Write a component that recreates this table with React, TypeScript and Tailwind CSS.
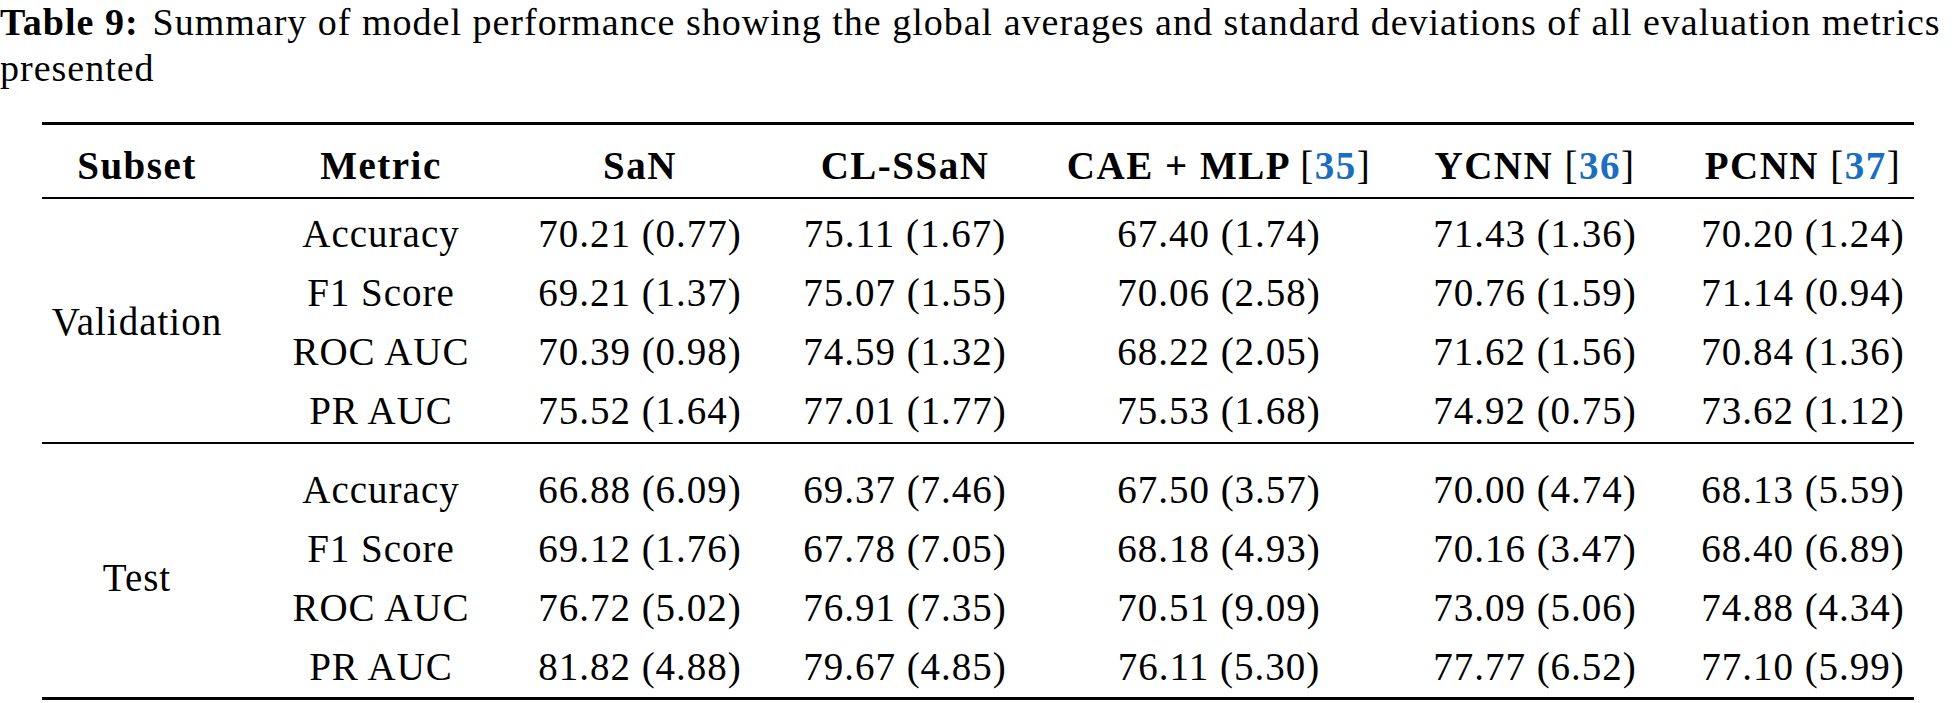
const COLS = "grid grid-cols-[190px_298px_220px_310px_318px_314px_222px]";

type Row = { metric: string; values: string[] };

const VALIDATION: Row[] = [
  { metric: "Accuracy", values: ["70.21 (0.77)", "75.11 (1.67)", "67.40 (1.74)", "71.43 (1.36)", "70.20 (1.24)"] },
  { metric: "F1 Score", values: ["69.21 (1.37)", "75.07 (1.55)", "70.06 (2.58)", "70.76 (1.59)", "71.14 (0.94)"] },
  { metric: "ROC AUC", values: ["70.39 (0.98)", "74.59 (1.32)", "68.22 (2.05)", "71.62 (1.56)", "70.84 (1.36)"] },
  { metric: "PR AUC", values: ["75.52 (1.64)", "77.01 (1.77)", "75.53 (1.68)", "74.92 (0.75)", "73.62 (1.12)"] },
];

const TEST: Row[] = [
  { metric: "Accuracy", values: ["66.88 (6.09)", "69.37 (7.46)", "67.50 (3.57)", "70.00 (4.74)", "68.13 (5.59)"] },
  { metric: "F1 Score", values: ["69.12 (1.76)", "67.78 (7.05)", "68.18 (4.93)", "70.16 (3.47)", "68.40 (6.89)"] },
  { metric: "ROC AUC", values: ["76.72 (5.02)", "76.91 (7.35)", "70.51 (9.09)", "73.09 (5.06)", "74.88 (4.34)"] },
  { metric: "PR AUC", values: ["81.82 (4.88)", "79.67 (4.85)", "76.11 (5.30)", "77.77 (6.52)", "77.10 (5.99)"] },
];

function Cite({ n }: { n: number }) {
  return (
    <>
      <span className="font-normal">[</span>
      <span className="text-[#1b6ec2]">{n}</span>
      <span className="font-normal">]</span>
    </>
  );
}

function HeadCell({ children }: { children: React.ReactNode }) {
  return (
    <div className="flex justify-center whitespace-nowrap pt-[11px] pb-[2px] leading-[59px] font-bold tracking-[1.5px]">
      <span>{children}</span>
    </div>
  );
}

function Section({ label, rows }: { label: string; rows: Row[] }) {
  return (
    <div className={COLS}>
      <div className="row-span-4 flex items-center justify-center whitespace-nowrap">{label}</div>
      {rows.map((r) => (
        <div key={r.metric} className="contents">
          <div className="flex h-[59px] items-center justify-center whitespace-nowrap leading-[59px]">
            {r.metric}
          </div>
          {r.values.map((v, i) => (
            <div key={i} className="flex h-[59px] items-center justify-center whitespace-nowrap leading-[59px]">
              {v}
            </div>
          ))}
        </div>
      ))}
    </div>
  );
}

export default function App() {
  return (
    <div className="w-[1954px] h-[703px] overflow-hidden bg-white text-black font-['Liberation_Serif',serif]">
      {/* caption */}
      <div className="text-[38px] tracking-[1px]">
        <div className="whitespace-nowrap leading-[44px]">
          <span className="font-bold mr-[14px]">Table 9:</span>
          Summary of model performance showing the global averages and standard deviations of all evaluation metrics
        </div>
        <div className="leading-[49px]">presented</div>
      </div>

      {/* table */}
      <div className="ml-[42px] mt-[29px] w-[1872px] text-[39px] tracking-[1px]">
        <div className="h-[3px] bg-black" />
        <div className={COLS}>
          <HeadCell>Subset</HeadCell>
          <HeadCell>Metric</HeadCell>
          <HeadCell>SaN</HeadCell>
          <HeadCell>CL-SSaN</HeadCell>
          <HeadCell>
            CAE + MLP <Cite n={35} />
          </HeadCell>
          <HeadCell>
            YCNN <Cite n={36} />
          </HeadCell>
          <HeadCell>
            PCNN <Cite n={37} />
          </HeadCell>
        </div>
        <div className="h-[2px] bg-black" />
        <div className="pt-[5px] pb-[2px]">
          <Section label="Validation" rows={VALIDATION} />
        </div>
        <div className="h-[2px] bg-black" />
        <div className="pt-[16px] pb-[1px]">
          <Section label="Test" rows={TEST} />
        </div>
        <div className="h-[3px] bg-black" />
      </div>
    </div>
  );
}
